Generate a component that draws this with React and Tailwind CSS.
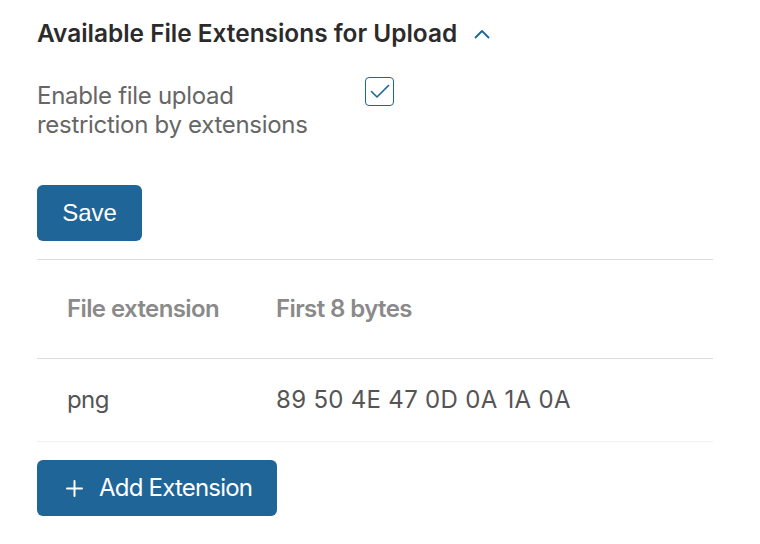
export default function App() {
  return (
    <div className="w-[760px] h-[544px] bg-white pl-[37px] pr-[47px] pt-[17px] font-['Inter',sans-serif]">
      <div className="flex items-center h-[32px]">
        <h2 className="text-[24.4px] font-semibold text-[#2b2b2b] leading-[32px]">
          Available File Extensions for Upload
        </h2>
        <svg className="ml-[17px] mt-[2px]" width="16" height="10" viewBox="0 0 16 10" fill="none">
          <path d="M1.5 8.5 L8 2 L14.5 8.5" stroke="#1f6598" strokeWidth="1.8" strokeLinecap="round" strokeLinejoin="round" />
        </svg>
      </div>

      <div className="flex items-start mt-[32px]">
        <div className="w-[328px] text-[24px] leading-[29px] text-[#666666] tracking-[-0.3px]">
          Enable file upload
          <br />
          restriction by extensions
        </div>
        <div className="w-[29px] h-[29px] mt-[-4px] border border-[#1f6598] rounded-[4px] flex items-center justify-center">
          <svg width="20" height="15" viewBox="0 0 20 15" fill="none">
            <path d="M1.5 7.5 L7 13 L18.5 1.5" stroke="#1f6598" strokeWidth="1.6" strokeLinecap="round" strokeLinejoin="round" />
          </svg>
        </div>
      </div>

      <button className="mt-[46px] w-[105px] h-[56px] bg-[#1f6598] rounded-[6px] text-white text-[24px] font-['Liberation_Sans',sans-serif]">
        Save
      </button>

      <div className="mt-[18px] border-t border-[#dcdcdc]">
        <div className="flex items-center h-[99px] border-b border-[#dcdcdc] text-[24px] font-semibold text-[#8a8a8a] tracking-[-0.6px]">
          <div className="w-[239px] pl-[30px]">File extension</div>
          <div>First 8 bytes</div>
        </div>
        <div className="flex items-center h-[83px] border-b border-[#f0f0f0] text-[24px] text-[#555555]">
          <div className="w-[239px] pl-[30px] tracking-[-0.6px]">png</div>
          <div className="tracking-[0.3px]">89 50 4E 47 0D 0A 1A 0A</div>
        </div>
      </div>

      <button className="mt-[18px] w-[240px] h-[56px] bg-[#1f6598] rounded-[6px] text-white text-[24px] tracking-[-0.8px] flex items-center pl-[29px]">
        <svg width="17" height="17" viewBox="0 0 17 17" fill="none">
          <path d="M8.5 1 V16 M1 8.5 H16" stroke="white" strokeWidth="2" strokeLinecap="round" />
        </svg>
        <span className="ml-[16px]">Add Extension</span>
      </button>
    </div>
  );
}
